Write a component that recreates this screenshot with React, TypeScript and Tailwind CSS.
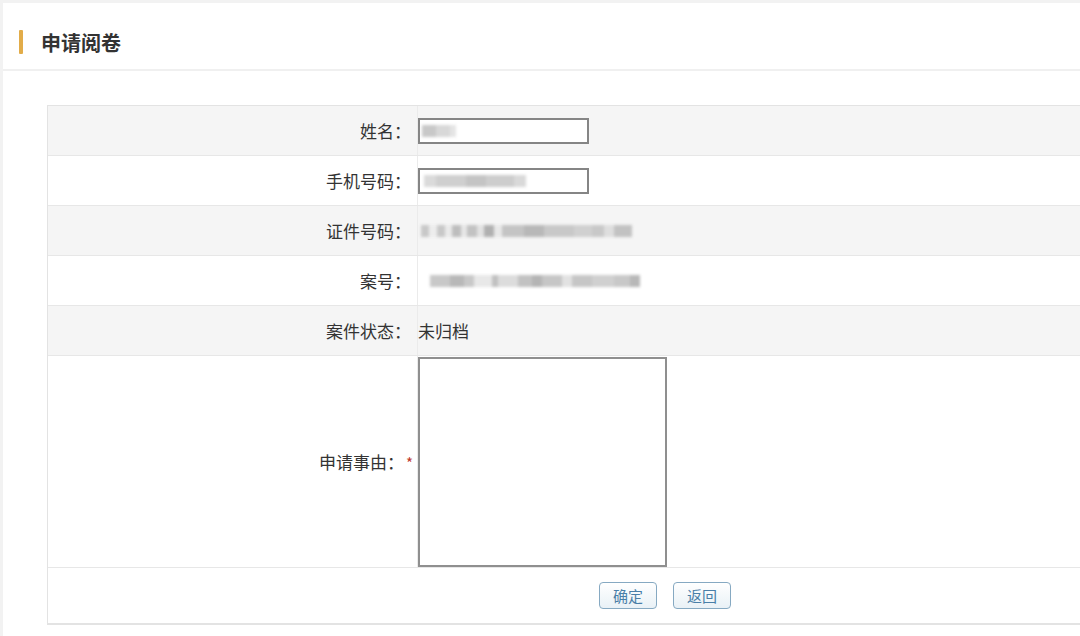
import React from "react";

const FONT = { fontFamily: '"Microsoft YaHei", "Noto Sans CJK SC", "Noto Sans", sans-serif' };

function Blur({ widths, className = "" }: { widths: [number, string][]; className?: string }) {
  // stand-in for the pixelated/blurred personal data
  return (
    <div className={`flex items-center h-[14px] blur-[1.5px] ${className}`}>
      {widths.map(([w, c], i) => (
        <div key={i} className="h-[12px]" style={{ width: w, background: c }} />
      ))}
    </div>
  );
}

function Row({ label, gray, required, children, tall }: { label: string; gray?: boolean; required?: boolean; children?: React.ReactNode; tall?: boolean }) {
  return (
    <div className={`flex border-b border-[#e7e7e7] ${gray ? "bg-[#f5f5f5]" : "bg-white"} ${tall ? "h-[212px]" : "h-[50px]"}`}>
      <div className="w-[370px] shrink-0 flex items-center justify-end pr-[6px] border-r border-[#ebebeb] text-[17px] text-[#333]">
        <span>{label}：</span>
        {required && <span className="text-[#c0392b] ml-[2px] mr-[-2px] text-[15px] translate-y-[2px]">*</span>}
      </div>
      <div className="flex-1 flex items-center text-[17px] text-[#333]">{children}</div>
    </div>
  );
}

function Btn({ text }: { text: string }) {
  return (
    <button className="w-[58px] h-[27px] rounded-[4px] border border-[#86a9c2] bg-gradient-to-b from-white to-[#e9f1f6] text-[15px] text-[#4a7fa8] leading-none">
      {text}
    </button>
  );
}

export default function App() {
  return (
    <div className="w-[1080px] h-[636px] overflow-hidden bg-[#f2f2f2] pt-[3px] pl-[3px]" style={FONT}>
      <div className="h-[68px] bg-white border-b-2 border-[#f0f0f0] flex items-start pt-[27px]">
        <div className="ml-[16px] w-[4px] h-[24px] bg-[#e2ac49] rounded-[1px]" />
        <h1 className="ml-[18px] text-[20px] leading-[24px] font-bold text-[#333] translate-y-[1px]">申请阅卷</h1>
      </div>
      <div className="bg-white h-[565px] pt-[34px] pl-[44px]">
        <div className="w-[1236px] border border-[#e3e3e3] border-b-2">
          <Row label="姓名" gray>
            <div className="w-[171px] h-[26px] border-2 border-[#858585] bg-white flex items-center pl-[2px]">
              <Blur widths={[[14, "#c8c8c8"], [14, "#d8d8d8"], [6, "#e4e4e4"]]} />
            </div>
          </Row>
          <Row label="手机号码">
            <div className="w-[171px] h-[26px] border-2 border-[#858585] bg-white flex items-center pl-[4px]">
              <Blur widths={[[12, "#dadada"], [30, "#cfcfcf"], [20, "#c4c4c4"], [28, "#cdcdcd"], [12, "#d9d9d9"]]} />
            </div>
          </Row>
          <Row label="证件号码" gray>
            <Blur
              className="ml-[3px]"
              widths={[[8, "#c8c8c8"], [8, "#ededed"], [8, "#c8c8c8"], [7, "#eaeaea"], [9, "#bdbdbd"], [6, "#e6e6e6"], [10, "#c2c2c2"], [7, "#e2e2e2"], [10, "#b0b0b0"], [8, "#e8e8e8"], [22, "#c4c4c4"], [20, "#b8b8b8"], [30, "#c8c8c8"], [18, "#d0d0d0"], [12, "#c8c8c8"], [10, "#dedede"], [18, "#c2c2c2"]]}
            />
          </Row>
          <Row label="案号">
            <Blur
              className="ml-[12px]"
              widths={[[20, "#c8c8c8"], [14, "#b8b8b8"], [10, "#c8c8c8"], [18, "#e8e8e8"], [6, "#c0c0c0"], [20, "#dcdcdc"], [14, "#c2c2c2"], [10, "#b4b4b4"], [20, "#c6c6c6"], [10, "#e2e2e2"], [20, "#c6c6c6"], [22, "#d0d0d0"], [16, "#c8c8c8"], [10, "#b8b8b8"]]}
            />
          </Row>
          <Row label="案件状态" gray>
            <span>未归档</span>
          </Row>
          <Row label="申请事由" required tall>
            <div className="w-[249px] h-[210px] border-2 border-[#8f8f8f] bg-white" />
          </Row>
          <div className="h-[55px] flex items-center justify-center gap-[16px]">
            <Btn text="确定" />
            <Btn text="返回" />
          </div>
        </div>
      </div>
    </div>
  );
}
